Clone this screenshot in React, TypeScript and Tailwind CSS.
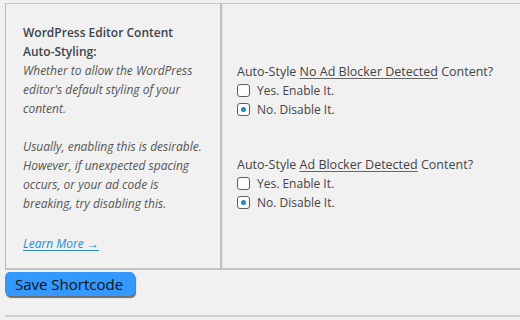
import React from 'react';

const font = { fontFamily: '"Open Sans", "Noto Sans", sans-serif' };

const Box = ({ checked }: { checked?: boolean }) => (
  <span className="w-[13px] h-[13px] shrink-0 rounded-[3px] border border-[#5b5f63] bg-white flex items-center justify-center">
    {checked && <span className="w-[5px] h-[5px] rounded-full bg-[#1e8cbe]"></span>}
  </span>
);

const Question = ({ lead, strong }: { lead: string; strong: string }) => (
  <div>
    <div className="leading-[19px] text-[12.5px]">
      {lead} <span className="underline underline-offset-2 decoration-[#666]">{strong}</span> Content?
    </div>
    <label className="flex items-center gap-[7px] h-[19px]">
      <Box />
      <span>Yes. Enable It.</span>
    </label>
    <label className="flex items-center gap-[7px] h-[19px]">
      <Box checked />
      <span>No. Disable It.</span>
    </label>
  </div>
);

export default function App() {
  return (
    <div className="w-[520px] h-[320px] overflow-hidden bg-[#f1f1f1] text-[#444] text-[12px]" style={font}>
      <div className="pt-[3px] pl-[5px]">
        <div className="w-[620px] h-[267px] grid grid-cols-[216px_1fr] border-t border-t-[#c8c2cc] border-l border-l-[#b8b8b8] border-b-2 border-b-[#c4c4c4]">
          <div className="pl-[17px] pr-3 pt-[19px] border-r-2 border-r-[#c0c0c0] leading-[19px]">
            <div className="font-semibold text-[#3c434a]">WordPress Editor Content<br />Auto-Styling:</div>
            <p className="italic text-[#555]">
              Whether to allow the WordPress editor's default styling of your content.
            </p>
            <p className="italic text-[#555] mt-[19px]">
              Usually, enabling this is desirable. However, if unexpected spacing occurs, or your ad code is breaking, try disabling this.
            </p>
            <a className="block mt-[21px] italic text-[#2a8ccd] underline underline-offset-2">Learn More →</a>
          </div>
          <div className="pl-[14px] border-l border-l-[#e4e4e4] flex flex-col justify-center gap-[36px] pt-[2px]">
            <Question lead="Auto-Style" strong="No Ad Blocker Detected" />
            <Question lead="Auto-Style" strong="Ad Blocker Detected" />
          </div>
        </div>
        <button className="mt-[2px] w-[130px] h-[24px] rounded-[5px] bg-[#3399ff] text-[#111] text-[15px] text-left pl-[10px] shadow-[1px_2px_1px_rgba(0,0,0,0.55)]">
          Save Shortcode
        </button>
        <div className="mt-[19px] h-[2px] bg-[#cfcfcf] w-[520px]"></div>
      </div>
    </div>
  );
}
